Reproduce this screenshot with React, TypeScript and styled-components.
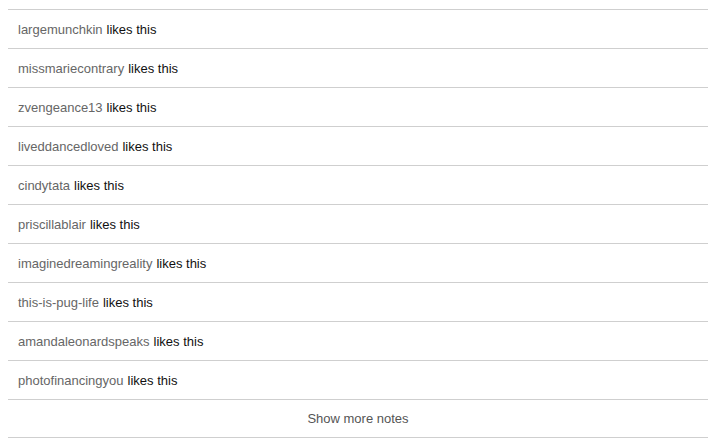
import React from "react";
import styled, { createGlobalStyle } from "styled-components";

const Global = createGlobalStyle`
  body {
    margin: 8px;
    background: #fff;
    font-family: "Liberation Sans", Arial, Helvetica, sans-serif;
  }
`;

const List = styled.ol`
  list-style: none;
  margin: 1px 0 0 0;
  padding: 0;
  width: 700px;
  border-top: 1px solid #cfcfcf;
`;

const Row = styled.li`
  height: 38px;
  display: flex;
  align-items: center;
  padding: 0 10px;
  border-bottom: 1px solid #cfcfcf;
  font-size: 13px;
  color: #111;
`;

const User = styled.a`
  color: #666;
  text-decoration: none;
  margin-right: 4px;
`;

const More = styled.li`
  height: 37px;
  display: flex;
  align-items: center;
  justify-content: center;
  border-bottom: 1px solid #cfcfcf;
  font-size: 13px;
  color: #555;
`;

const users = [
  "largemunchkin",
  "missmariecontrary",
  "zvengeance13",
  "liveddancedloved",
  "cindytata",
  "priscillablair",
  "imaginedreamingreality",
  "this-is-pug-life",
  "amandaleonardspeaks",
  "photofinancingyou",
];

export default function App() {
  return (
    <>
      <Global />
      <List>
        {users.map((u) => (
          <Row key={u}>
            <User href="#">{u}</User>likes this
          </Row>
        ))}
        <More>Show more notes</More>
      </List>
    </>
  );
}
